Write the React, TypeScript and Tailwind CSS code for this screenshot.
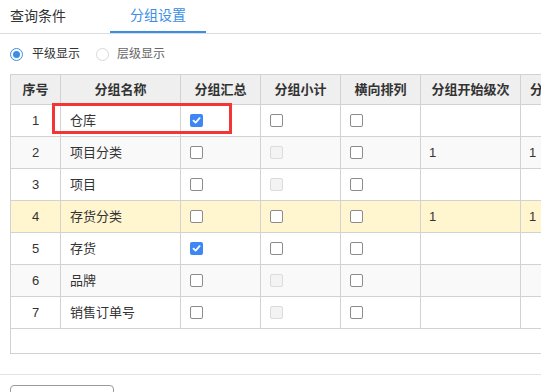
import React from "react";

type Row = {
  no: number;
  name: string;
  sum: "checked" | "unchecked";
  sub: "unchecked" | "disabled";
  horiz: boolean;
  start: string;
  next: string;
  bg: string;
};

const rows: Row[] = [
  { no: 1, name: "仓库", sum: "checked", sub: "unchecked", horiz: false, start: "", next: "", bg: "bg-white" },
  { no: 2, name: "项目分类", sum: "unchecked", sub: "disabled", horiz: false, start: "1", next: "1", bg: "bg-[#f9f9f9]" },
  { no: 3, name: "项目", sum: "unchecked", sub: "disabled", horiz: false, start: "", next: "", bg: "bg-white" },
  { no: 4, name: "存货分类", sum: "unchecked", sub: "unchecked", horiz: false, start: "1", next: "1", bg: "bg-[#fff6cf]" },
  { no: 5, name: "存货", sum: "checked", sub: "unchecked", horiz: false, start: "", next: "", bg: "bg-white" },
  { no: 6, name: "品牌", sum: "unchecked", sub: "disabled", horiz: false, start: "", next: "", bg: "bg-[#f9f9f9]" },
  { no: 7, name: "销售订单号", sum: "unchecked", sub: "disabled", horiz: false, start: "", next: "", bg: "bg-white" },
];

function Box({ kind }: { kind: "checked" | "unchecked" | "disabled" }) {
  if (kind === "checked") {
    return (
      <span className="flex h-[13px] w-[13px] items-center justify-center rounded-[2px] bg-[#3d87f5]">
        <svg width="9" height="9" viewBox="0 0 9 9">
          <path d="M1.5 4.6 L3.6 6.6 L7.6 2.2" fill="none" stroke="white" strokeWidth="1.8" strokeLinecap="round" strokeLinejoin="round" />
        </svg>
      </span>
    );
  }
  if (kind === "disabled") {
    return <span className="block h-[13px] w-[13px] rounded-[2px] border border-[#dcdcdc] bg-[#f3f3f3]" />;
  }
  return <span className="block h-[13px] w-[13px] rounded-[2px] border border-[#8c8c8c] bg-white" />;
}

const cell = "shrink-0 border-r border-[#d2d2d2] flex items-center";

export default function App() {
  return (
    <div
      className="relative h-[392px] w-[541px] overflow-hidden bg-white text-[#333]"
      style={{ fontFamily: '"Liberation Sans", "Noto Sans CJK SC", sans-serif' }}
    >
      {/* Tabs */}
      <div className="flex h-[34px] border-b border-[#dcdcdc]">
        <div className="flex h-[33px] items-center pl-[10px] pr-[44px] text-[14px] text-[#333]">查询条件</div>
        <div className="flex h-[33px] w-[96px] items-center justify-center border-b-2 border-[#3a8ee6] text-[14px] text-[#3a8ee6]">
          分组设置
        </div>
      </div>

      {/* Radios */}
      <div className="flex h-[40px] items-center pl-[10px] text-[12px]">
        <span className="flex h-[13px] w-[13px] items-center justify-center rounded-full border border-[#3a8ee6]">
          <span className="h-[7px] w-[7px] rounded-full bg-[#3a8ee6]" />
        </span>
        <span className="ml-[9px] text-[#333]">平级显示</span>
        <span className="ml-[16px] block h-[13px] w-[13px] rounded-full border border-[#d9d9d9]" />
        <span className="ml-[8px] text-[#666]">层级显示</span>
      </div>

      {/* Table */}
      <div className="ml-[10px] h-[280px] overflow-hidden border-l border-t border-b border-[#d2d2d2] text-[13px]">
        <div className="flex h-[30px] w-[700px] border-b border-[#d2d2d2] bg-[#efefef] font-bold text-[#333]">
          <div className={`${cell} w-[50px] justify-center`}>序号</div>
          <div className={`${cell} w-[120px] justify-center`}>分组名称</div>
          <div className={`${cell} w-[80px] justify-center`}>分组汇总</div>
          <div className={`${cell} w-[80px] justify-center`}>分组小计</div>
          <div className={`${cell} w-[80px] justify-center`}>横向排列</div>
          <div className={`${cell} w-[100px] justify-center`}>分组开始级次</div>
          <div className={`${cell} w-[100px] pl-[9px]`}>分组结束级次</div>
        </div>
        {rows.map((r) => (
          <div key={r.no} className={`flex h-[32px] w-[700px] border-b border-[#d2d2d2] ${r.bg}`}>
            <div className={`${cell} w-[50px] justify-center`}>{r.no}</div>
            <div className={`${cell} w-[120px] pl-[9px]`}>{r.name}</div>
            <div className={`${cell} w-[80px] pl-[9px]`}>
              <Box kind={r.sum} />
            </div>
            <div className={`${cell} w-[80px] pl-[9px]`}>
              <Box kind={r.sub} />
            </div>
            <div className={`${cell} w-[80px] pl-[9px]`}>
              <Box kind="unchecked" />
            </div>
            <div className={`${cell} w-[100px] pl-[8px]`}>{r.start}</div>
            <div className={`${cell} w-[100px] pl-[8px]`}>{r.next}</div>
          </div>
        ))}
      </div>

      {/* Footer */}
      <div className="mt-[20px] border-t border-[#e3e3e3] pt-[10px] pl-[10px]">
        <div className="h-[30px] w-[104px] rounded-[4px] border border-[#9a9a9a] bg-white" />
      </div>

      {/* Highlight box */}
      <div className="absolute left-[52px] top-[103px] h-[31px] w-[180px] border-[3px] border-[#f23535]" />
    </div>
  );
}
